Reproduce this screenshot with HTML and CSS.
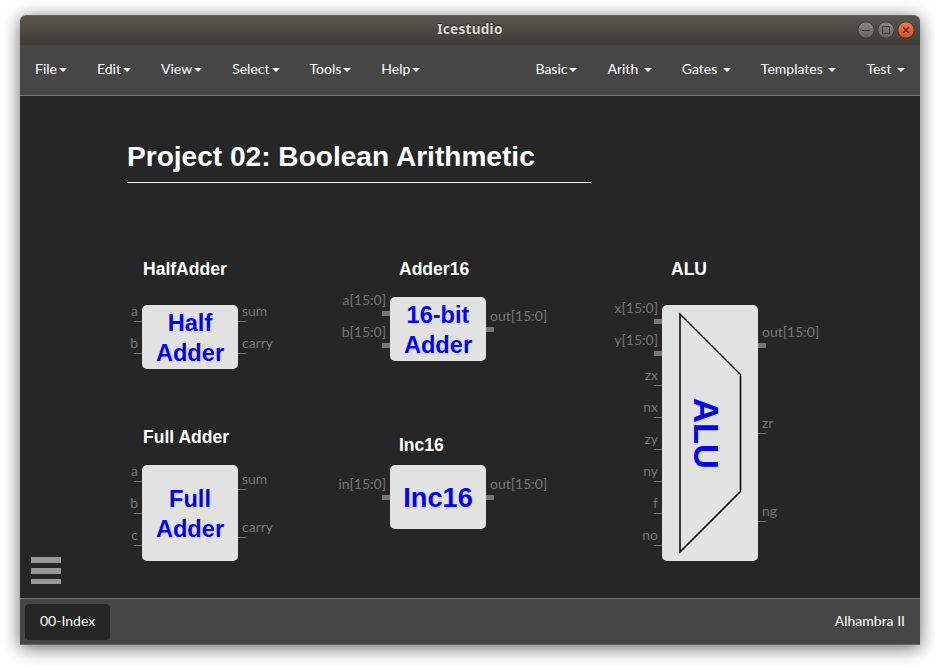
FILE: index.html
```html
<!DOCTYPE html>
<html lang="en">
<head>
<meta charset="utf-8">
<title>Icestudio</title>
<link rel="stylesheet" href="styles.css">
</head>
<body>
<div class="window">
  <header class="titlebar">
    <span class="app-title">Icestudio</span>
    <div class="controls">
      <svg class="control" viewBox="0 0 18 18"><circle class="gray" cx="9" cy="9" r="8.2"/><path d="M5 9.5h8"/></svg>
      <svg class="control" viewBox="0 0 18 18"><circle class="gray" cx="9" cy="9" r="8.2"/><path d="M5.5 5.5h7v7h-7z"/></svg>
      <svg class="control" viewBox="0 0 18 18"><defs>
        <linearGradient id="gray" x2="0" y2="1"><stop stop-color="#8b8982"/><stop offset="1" stop-color="#66645d"/></linearGradient>
        <linearGradient id="orange" x2="0" y2="1"><stop stop-color="#f47b55"/><stop offset="1" stop-color="#df4a16"/></linearGradient>
      </defs><circle class="orange" cx="9" cy="9" r="8.2"/><path class="cross" d="M6.2 6.2l5.6 5.6M11.800 6.2l-5.600 5.600"/></svg>
    </div>
  </header>
  <nav class="menubar">
    <div class="menu">
      <span class="item">File<i class="caret"></i></span>
      <span class="item">Edit<i class="caret"></i></span>
      <span class="item">View<i class="caret"></i></span>
      <span class="item">Select<i class="caret"></i></span>
      <span class="item">Tools<i class="caret"></i></span>
      <span class="item">Help<i class="caret"></i></span>
    </div>
    <div class="menu">
      <span class="item">Basic<i class="caret"></i></span>
      <span class="item">Arith <i class="caret"></i></span>
      <span class="item">Gates <i class="caret"></i></span>
      <span class="item">Templates <i class="caret"></i></span>
      <span class="item">Test <i class="caret"></i></span>
    </div>
  </nav>
  <main class="canvas">
    <h1 class="heading">Project 02: Boolean Arithmetic</h1>

    <h2 class="label label-half">HalfAdder</h2>
    <div class="block half">
      <div class="ports in"><div class="port"><span>a</span></div><div class="port"><span>b</span></div></div>
      <div class="name">Half<br>Adder</div>
      <div class="ports out"><div class="port"><span>sum</span></div><div class="port"><span>carry</span></div></div>
    </div>

    <h2 class="label label-add16">Adder16</h2>
    <div class="block add16">
      <div class="ports in"><div class="port bus"><span>a[15:0]</span></div><div class="port bus"><span>b[15:0]</span></div></div>
      <div class="name">16-bit<br>Adder</div>
      <div class="ports out"><div class="port bus"><span>out[15:0]</span></div></div>
    </div>

    <h2 class="label label-alu">ALU</h2>
    <div class="block alu">
      <div class="ports in">
        <div class="port bus"><span>x[15:0]</span></div><div class="port bus"><span>y[15:0]</span></div>
        <div class="port"><span>zx</span></div><div class="port"><span>nx</span></div>
        <div class="port"><span>zy</span></div><div class="port"><span>ny</span></div>
        <div class="port"><span>f</span></div><div class="port"><span>no</span></div>
      </div>
      <svg class="shape" viewBox="0 0 96 256"><path d="M18 9L78.500 69.500V186.500L18 247z"/><text x="0" y="0" transform="translate(32 93) rotate(90)">ALU</text></svg>
      <div class="ports out"><div class="port bus"><span>out[15:0]</span></div><div class="port middle"><span>zr</span></div><div class="port"><span>ng</span></div></div>
    </div>

    <h2 class="label label-full">Full Adder</h2>
    <div class="block full">
      <div class="ports in"><div class="port"><span>a</span></div><div class="port"><span>b</span></div><div class="port"><span>c</span></div></div>
      <div class="name">Full<br>Adder</div>
      <div class="ports out"><div class="port"><span>sum</span></div><div class="port"><span>carry</span></div></div>
    </div>

    <h2 class="label label-inc16">Inc16</h2>
    <div class="block inc16">
      <div class="ports in"><div class="port bus"><span>in[15:0]</span></div></div>
      <div class="name large">Inc16</div>
      <div class="ports out"><div class="port bus"><span>out[15:0]</span></div></div>
    </div>

    <div class="toggle"><i></i><i></i><i></i></div>
  </main>
  <footer class="footer">
    <span class="tab">00-Index</span>
    <span class="board">Alhambra II</span>
  </footer>
</div>
</body>
</html>
```
FILE: styles.css
```css
* { box-sizing: border-box; }
body {
  margin: 0;
  padding: 15px 15px 20px 20px;
  background: #fff;
  font: 14px/20px Lato, sans-serif;
  color: #fff;
  overflow: hidden;
}
.window {
  width: 900px;
  height: 630px;
  display: flex;
  flex-direction: column;
  border-radius: 6px 6px 0 0;
  box-shadow: 0 3px 18px rgba(0, 0, 0, .6);
}
.titlebar {
  height: 30px;
  display: grid;
  grid-template-columns: 1fr auto 1fr;
  align-items: center;
  padding-bottom: 1px;
  border-radius: 6px 6px 0 0;
  border-top: 1px solid #66685a;
  background: linear-gradient(#59574e, #3d3c37);
}
.app-title {
  grid-column: 2;
  padding-bottom: 2px;
  font: bold 13.5px/20px "Noto Sans", sans-serif;
  letter-spacing: .3px;
  color: #dfdbd2;
  text-shadow: 0 -1px 1px #222;
}
.controls { display: flex; justify-content: flex-end; gap: 2px; padding-right: 5px; }
.control { width: 18px; height: 18px; fill: none; stroke: #3a3935; }
.control .gray { fill: url(#gray); }
.control .orange { fill: url(#orange); }
.control .cross { stroke-width: 1.5; }
.menubar {
  height: 51px;
  display: flex;
  justify-content: space-between;
  background: #464646;
  border-bottom: 1px solid #777;
}
.menu { display: flex; }
.item { padding: 14px 15px; white-space: pre; }
.caret {
  display: inline-block;
  margin-left: 2px;
  vertical-align: middle;
  border-top: 4px solid #fff;
  border-left: 4px solid transparent;
  border-right: 4px solid transparent;
}
.canvas { position: relative; flex: 1; background: #262626; }
.heading, .label { position: absolute; margin: 0; font-family: "Liberation Sans", sans-serif; white-space: nowrap; }
.heading {
  left: 107px;
  top: 43px;
  width: 464px;
  height: 44px;
  font-size: 28.08px;
  line-height: 36px;
  border-bottom: 1px solid #eee;
}
.label { font-size: 17.55px; line-height: 22px; }
.label-half { left: 123px; top: 162px; }
.label-add16 { left: 379px; top: 162px; }
.label-alu { left: 651px; top: 162px; }
.label-full { left: 123px; top: 330px; }
.label-inc16 { left: 379px; top: 338px; }
.block {
  position: absolute;
  width: 96px;
  height: 64px;
  display: flex;
  justify-content: center;
  align-items: center;
  border-radius: 5px;
  background: #e2e2e2;
}
.half { left: 122px; top: 209px; }
.add16 { left: 370px; top: 201px; }
.alu { left: 642px; top: 209px; height: 256px; }
.full { left: 122px; top: 369px; height: 96px; }
.inc16 { left: 370px; top: 369px; }
.name { padding-top: 2px; font: bold 23.6px/30px "Liberation Sans", sans-serif; color: #00f; text-align: center; }
.name.large { font-size: 27.2px; }
.ports { position: absolute; top: 0; bottom: 0; display: flex; flex-direction: column; color: #777; }
.in { right: 100%; }
.out { left: 100%; }
.port { position: relative; flex: 80 0 0; min-height: 0; display: flex; align-items: center; padding: 0 4px; }
.port.middle { flex-grow: 96; }
.in .port { justify-content: flex-end; }
.port span { line-height: 20px; margin-bottom: 20px; }
.port.bus span { margin-bottom: 26px; }
.port::after {
  content: "";
  position: absolute;
  top: 50%;
  width: 8px;
  height: 1px;
  background: #777;
}
.in .port::after { right: 0; }
.out .port::after { left: 0; }
.port.bus::after { height: 5px; margin-top: -2px; }
.shape { width: 96px; height: 256px; fill: none; stroke: #000; stroke-width: 1.5; }
.shape text { font: bold 34.6px "Liberation Sans", sans-serif; fill: #00f; stroke: none; }
.toggle { position: absolute; left: 11px; top: 461px; width: 30px; display: flex; flex-direction: column; gap: 5px; }
.toggle i { height: 6px; background: #999; }
.toggle i:last-child { height: 5px; }
.footer {
  height: 47px;
  display: flex;
  justify-content: space-between;
  align-items: center;
  padding: 0 15px 0 5px;
  background: #464646;
  border-top: 1px solid #777;
  border-bottom: 1px solid #666;
}
.tab { padding: 7px 15px 9px; border-radius: 4px; background: #262626; }
.board { padding-bottom: 2px; }
```
